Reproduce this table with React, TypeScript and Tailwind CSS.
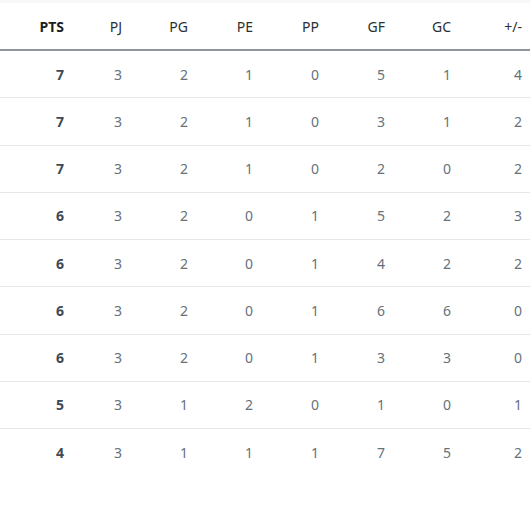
const COLS = ["PTS", "PJ", "PG", "PE", "PP", "GF", "GC", "+/-"];

const ROWS: number[][] = [
  [7, 3, 2, 1, 0, 5, 1, 4],
  [7, 3, 2, 1, 0, 3, 1, 2],
  [7, 3, 2, 1, 0, 2, 0, 2],
  [6, 3, 2, 0, 1, 5, 2, 3],
  [6, 3, 2, 0, 1, 4, 2, 2],
  [6, 3, 2, 0, 1, 6, 6, 0],
  [6, 3, 2, 0, 1, 3, 3, 0],
  [5, 3, 1, 2, 0, 1, 0, 1],
  [4, 3, 1, 1, 1, 7, 5, 2],
];

const GRID = "grid grid-cols-[72px_58px_66px_65px_66px_66px_66px_71px]";

export default function App() {
  return (
    <div
      className="w-[530px] min-h-[521px] bg-white"
      style={{ fontFamily: '"Noto Sans", "Open Sans", sans-serif' }}
    >
      <div className="h-[3px] bg-[#f6f7f8]" />
      <div className={`${GRID} h-[48px] items-center border-b-2 border-[#8e979f] text-[14px] text-[#2b2f33]`}>
        {COLS.map((c, i) => (
          <div key={c} className={`pr-2 text-right ${i === 0 ? "font-bold text-[#1c1f22]" : ""}`}>
            {c}
          </div>
        ))}
      </div>
      {ROWS.map((row, r) => (
        <div
          key={r}
          className={`${GRID} h-[47.25px] items-center text-[14px] text-[#66717a] ${
            r < ROWS.length - 1 ? "border-b border-[#e3e7ea]" : ""
          }`}
        >
          {row.map((v, i) => (
            <div key={i} className={`pr-2 text-right ${i === 0 ? "font-bold text-[#3e4a55]" : ""}`}>
              {v}
            </div>
          ))}
        </div>
      ))}
    </div>
  );
}
